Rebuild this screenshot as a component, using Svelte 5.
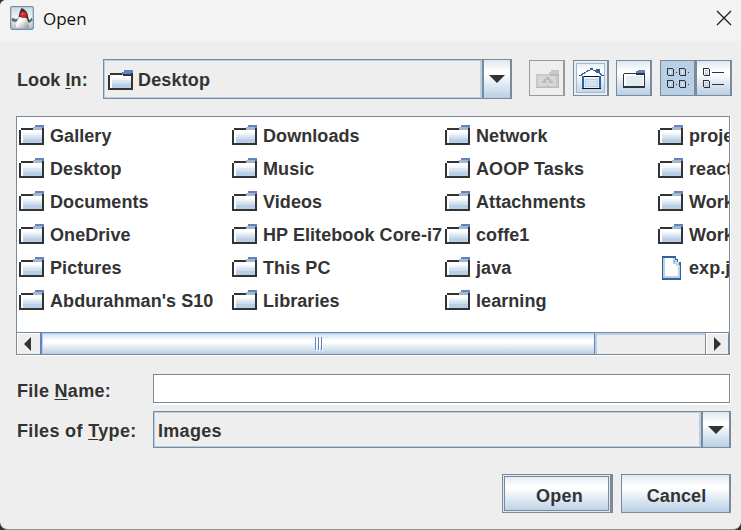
<script>
  const columns = [
    ['Gallery', 'Desktop', 'Documents', 'OneDrive', 'Pictures', "Abdurahman's S10"],
    ['Downloads', 'Music', 'Videos', 'HP Elitebook Core-i7', 'This PC', 'Libraries'],
    ['Network', 'AOOP Tasks', 'Attachments', 'coffe1', 'java', 'learning'],
    ['proje', 'react', 'Work', 'Work', 'exp.j']
  ];
</script>

{#snippet folder(plain)}
  <svg class="folder" width="25" height="20" viewBox="0 0 25 20" shape-rendering="crispEdges">
    <path fill="#fff" d="M2 5h21v13H2z" />
    <path fill="#f2f6fb" d="M4 8h19v10H4z" />
    <path fill="#dce8f4" d="M4 10h19v8H4z" />
    <path fill="#cfdfef" d="M4 12h19v6H4z" />
    <path fill="#b8cfe5" d="M4 14h19v4H4z" />
    <path fill="#333" d="M0 5h2v13h21V3h2v17H0zM2 3h14v2H2z" />
    <path fill="#6382bf" d="M16 0h9v3h-9z" />
    <path fill={plain ? '#6382bf' : '#a3b8cc'} d="M14 2h9v3h-9z" />
    {#if plain}<path fill="#333" d="M15 4h10v2H15z" />{/if}
  </svg>
{/snippet}

{#snippet page(x, y)}
  <path fill="#b8cfe5" d="M{x + 2} {y + 2}h3v5h-3z" />
  <path fill="#333" d="M{x} {y}h6v1h1v7h-6v-1h-1zM{x + 1} {y + 1}v6h5v-6z" fill-rule="evenodd" />
  <path fill="#fff" d="M{x + 3} {y + 3}h1v2h-1z" />
{/snippet}

<div class="window">
  <header>
    <svg width="24" height="24" viewBox="0 0 24 24">
      <defs>
        <linearGradient id="tile" x2="0" y2="1"><stop stop-color="#cbd8e2" /><stop offset=".5" stop-color="#f3f5f6" /><stop offset="1" stop-color="#a9bdcc" /></linearGradient>
        <linearGradient id="belly" x2="1" y2="1"><stop offset=".35" stop-color="#fff" /><stop offset="1" stop-color="#8e8e8e" /></linearGradient>
      </defs>
      <rect x=".7" y=".7" width="22.6" height="22.6" rx="1.5" fill="url(#tile)" stroke="#6f8ea8" stroke-width="1.2" />
      <path d="M9 12Q5 14 2.500 11.500L1.500 14.500Q4 17 8 15zM16 12l3.500 2L22 11.500l.6 3L20 16.500l-4-2z" fill="#666e74" />
      <path d="M11.500 2Q15.500 3 17.500 7.500L19.500 17l-5-3-6-1Q9 6 11.500 2z" fill="#34383b" />
      <path d="M9.500 11Q6 15 6 21q1 2 3 .5 3-1 6 .5 3 1.500 4-1 0-5-2.500-9z" fill="url(#belly)" />
      <circle cx="13.300" cy="8.800" r="3.100" fill="#e82224" />
      <circle cx="12.500" cy="8" r="1" fill="#ff6258" />
    </svg>
    <span class="title">Open</span>
    <svg class="close" width="16" height="16" viewBox="0 0 16 16"><path d="M1 1l14 14M15 1L1 15" stroke="#1b1b1b" stroke-width="1.250" /></svg>
  </header>

  <div class="lookin">
    <span class="label">Look <u>I</u>n:</span>
    <div class="combo top">
      <div class="value">{@render folder(true)}<span>Desktop</span></div>
      <div class="arrow"><svg width="16" height="8" viewBox="0 0 16 8"><path d="M0 0h16L8 8z" fill="#333" /></svg></div>
    </div>
    <div class="tool disabled">
      <svg width="34" height="34" viewBox="0 0 34 34" shape-rendering="crispEdges">
        <path fill="#c8c8c8" d="M6 13h13v-2h2v-2h8v18H6z" />
        <path fill="#d6d6d6" d="M8 15h18v10H8z" />
        <path fill="#bababa" d="M20 13h9v2h-9zM6 26h23v1H6zM28 13h1v14h-1zM16 16h3v2h2v2h2v2h-4v4h-3v-4h-4v-2h2v-2h2z" />
        <path fill="#d2d2d2" d="M16 19h3v6h-3z" />
      </svg>
    </div>
    <div class="tool home">
      <svg width="34" height="34" viewBox="0 0 34 34" shape-rendering="crispEdges">
        <path fill="#fff" d="M16 9h3v2h4v2h3v2h2v1H7v-1h2v-2h3v-2h4z" />
        <path fill="#31629c" d="M16 7h3v2h-3zM13 9h3v1h-3zM12 10h2v1h-2zM19 9h3v1h-3zM21 10h2v1h-2zM10 11h2v1h-2zM8 12h3v1H8zM7 13h2v1H7zM5 14h3v1H5zM22 8h4v4h-4zM25 12h2v1h-2zM26 13h2v1h-2zM27 14h3v1h-3zM8 15h2v13H8zM25 15h2v13h-2z" />
        <path fill="#e4edf6" d="M10 17h15v10H10z" /><path fill="#b8cfe5" d="M11 18h13v8H11z" /><path fill="#d2e2f2" d="M12 19h11v6H12z" />
        <path fill="#111" d="M10 15h15v1H10zM8 27h19v1H8z" />
      </svg>
    </div>
    <div class="tool newfolder">
      <svg width="34" height="34" viewBox="0 0 34 34" shape-rendering="crispEdges">
        <path fill="#fff" d="M7 13h20v13H7z" /><path fill="#e1ecf7" d="M9 15h17v10H9z" />
        <path fill="#333" d="M6 13h1v12h20V13h1v14H6zM7 12h12v1H7zM19 12h9v2h-9z" />
        <path fill="#6382bf" d="M21 9h7v3h-9v-2h2z" />
      </svg>
    </div>
    <div class="tool grid selected">
      <svg width="34" height="34" viewBox="0 0 34 34" shape-rendering="crispEdges">
        {#each [7, 19] as y}
          {#each [6, 18] as x}
            {@render page(x, y)}
            <path fill="#333" d="M{x + 9} {y + 4}h1v1h-1z" />
          {/each}
        {/each}
      </svg>
    </div>
    <div class="tool">
      <svg width="34" height="34" viewBox="0 0 34 34" shape-rendering="crispEdges">
        {#each [7, 19] as y}
          {@render page(6, y)}
          <path fill="#333" d="M15 {y + 4}h12v1H15z" />
        {/each}
      </svg>
    </div>
  </div>

  <div class="list">
    <div class="files">
      {#each columns as column}
        <div class="column">
          {#each column as name}
            <div class="file">
              {#if name.startsWith('exp.')}
                <svg class="doc" width="19" height="24" viewBox="0 0 19 24" shape-rendering="crispEdges">
                  <path d="M0 0h14v3h2v3h3v18H0z" fill="#31629c" />
                  <path d="M1 2h11v4h3v3h3v13H1z" fill="#b8cfe5" />
                  <path d="M3 2h8v6h3v2h2v10H3z" fill="#fff" />
                  <path d="M12 2h1v2h2v2h2v3h-2V7h-2V5h-1z" fill="#cfe0f1" />
                </svg>
              {:else}{@render folder(false)}{/if}
              <span>{name}</span>
            </div>
          {/each}
        </div>
      {/each}
    </div>
    <div class="scroll">
      <div class="step left"><svg width="7" height="14" viewBox="0 0 7 14"><path d="M7 0v14L0 7z" fill="#333" /></svg></div>
      <div class="thumb"><i></i><i></i><i></i></div>
      <div class="track"></div>
      <div class="step right"><svg width="7" height="14" viewBox="0 0 7 14"><path d="M0 0v14l7-7z" fill="#333" /></svg></div>
    </div>
  </div>

  <div class="field name"><span class="label">File <u>N</u>ame:</span><div class="input"></div></div>
  <div class="field type">
    <span class="label">Files of <u>T</u>ype:</span>
    <div class="combo">
      <div class="value"><span>Images</span></div>
      <div class="arrow"><svg width="16" height="8" viewBox="0 0 16 8"><path d="M0 0h16L8 8z" fill="#333" /></svg></div>
    </div>
  </div>

  <div class="actions">
    <div class="button default"><span>Open</span></div>
    <div class="button"><span>Cancel</span></div>
  </div>
</div>

<style>
  :global(body) { background: #303030; overflow: hidden; }
  .window, .window * { box-sizing: border-box; }
  .window {
    width: 741px; height: 530px; background: #eee; border-bottom: 1px solid #8c8c8c; border-radius: 6px 0 8px 8px;
    overflow: hidden; color: #333; font: bold 18px/22px "Liberation Sans", Arial, sans-serif; letter-spacing: .3px;
    display: flex; flex-direction: column; white-space: nowrap;
  }
  svg { display: block; flex: none; }
  header { height: 41px; background: #f3f3f3; display: flex; padding: 6px 10px 0; flex: none; }
  .title { margin: 2px auto 0 9px; font: 17px/22px "Open Sans", "Noto Sans", sans-serif; color: #111; letter-spacing: 0; }
  .close { margin: 4px -1px 0 0; }
  u { text-underline-offset: 2px; text-decoration-thickness: 1px; text-decoration-skip-ink: none; }

  .lookin { height: 75px; padding: 18px 0 0 17px; display: flex; flex: none; }
  .lookin .label { width: 86px; padding-top: 10px; letter-spacing: .1px; }
  .combo { display: flex; width: 578px; height: 37px; border: 1px solid #7a8a99; border-right: 0; }
  .combo.top { width: 409px; height: 40px; margin-right: 17px; }
  .value { flex: 1; border: 1px solid #b8cfe5; border-right-width: 2px; display: flex; align-items: center; padding: 2px 0 0 3px; }
  .top .value span { margin-left: 5px; letter-spacing: .15px; }
  .arrow {
    width: 30px; border: solid #7a8a99; border-width: 0 2px; display: flex; align-items: center; justify-content: center;
    background: linear-gradient(#dde8f3, #fff 30%, #fff 36%, #b8cfe5);
  }
  .tool {
    width: 36px; height: 36px; margin-top: 1px; border: 1px solid #7a8a99; border-right-width: 2px;
    background: linear-gradient(#dde8f3, #fff 30%, #fff 36%, #b8cfe5); flex: none;
  }
  .disabled { background: none; border-color: #999; margin-right: 8px; }
  .home { margin-right: 7px; box-shadow: inset 0 0 0 2px #e4edf6, inset 0 0 0 3px #a3b8cc; }
  .newfolder { margin-right: 8px; }
  .selected { background: #b8cfe5; }

  .list {
    width: 714px; height: 239px; margin-left: 16px; border: 1px solid #7a8a99; background: #fff;
    box-shadow: 1px 1px 0 #fff; display: flex; flex-direction: column; flex: none;
  }
  .files { height: 215px; padding: 2px 0 0 2px; display: flex; overflow: hidden; }
  .column { width: 213px; flex: none; }
  .file { height: 33px; display: flex; padding-top: 6px; letter-spacing: .07px; }
  .file span { margin: 0 0 0 6px; }
  .doc { margin: -1px 2px 0 4px; }
  .scroll { height: 22px; display: flex; background: #eee; border-top: 1px solid #7a8a99; }
  .step { width: 23px; display: flex; align-items: center; border: solid #fff; border-width: 1px 0 0 1px; }
  .left { padding-left: 6px; }
  .right { width: 23px; padding-left: 7px; border-right: 1px solid #7a8a99; }
  .thumb {
    width: 555px; margin-top: -1px; border: 1px solid #6382bf; border-width: 1px 1px 0 2px; display: flex; gap: 2px;
    justify-content: center; align-items: center; background: linear-gradient(#c8d9eb, #dde8f3 10%, #fff 36%, #fff 44%, #b8cfe5);
    box-shadow: inset 1px 1px 0 #b8cfe5;
  }
  .thumb i { width: 1px; height: 13px; background: #6382bf; box-shadow: 1px 1px 0 #fff; }
  .track { flex: 1; border: solid #b8cfe5; border-width: 2px 0 0 2px; border-right: 1px solid #7a8a99; }

  .field { display: flex; padding-left: 17px; flex: none; }
  .field .label { width: 136px; }
  .name { margin-top: 19px; height: 37px; }
  .name .label { padding-top: 6px; }
  .input { width: 577px; height: 29px; border: 1px solid #7a8a99; background: #fff; box-shadow: 1px 2px 0 #fff; }
  .type { height: 37px; }
  .type .label { padding-top: 9px; letter-spacing: .35px; }

  .actions { display: flex; gap: 8px; padding: 26px 0 0 502px; }
  .button {
    width: 110px; height: 39px; border: 1px solid #7a8a99; border-right-width: 2px; display: flex; align-items: center;
    justify-content: center; padding: 4px 0 0 2px; letter-spacing: .1px; background: linear-gradient(#dde8f3, #fff 30%, #fff 36%, #b8cfe5);
  }
  .default { width: 111px; padding-left: 6px; letter-spacing: .3px; box-shadow: inset 0 0 0 1px #dde8f3, inset 0 0 0 2px #7a8a99; border-right-width: 3px; }
</style>
